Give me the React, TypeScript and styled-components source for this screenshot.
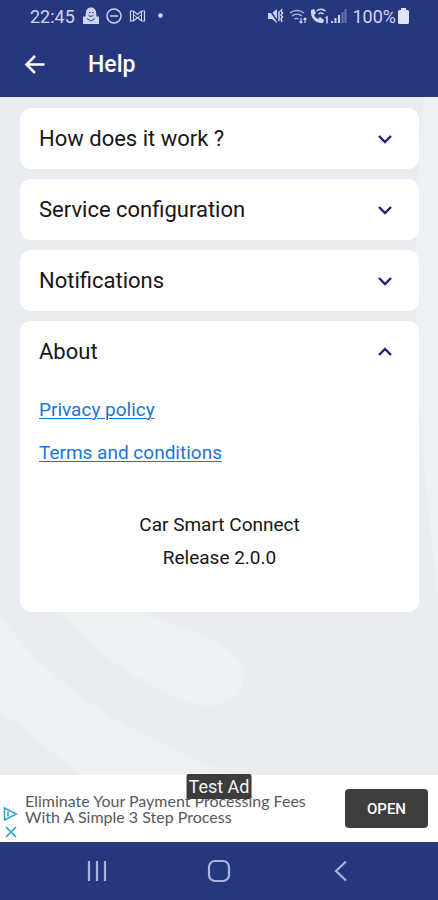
import React, { useState } from "react";
import styled, { createGlobalStyle } from "styled-components";

const NAVY = "#27377d";
const PALE = "#cdd5f3";

const GlobalStyle = createGlobalStyle`
  *, *::before, *::after { box-sizing: border-box; }
  body { margin: 0; background: #e9edf1; }
  button { font: inherit; color: inherit; background: none; border: 0; padding: 0; cursor: pointer; }
`;

const Screen = styled.div`
  display: flex;
  flex-direction: column;
  min-height: 100vh;
  font-family: Roboto, "Noto Sans", sans-serif;
  color: #161616;
`;

const StatusBar = styled.div`
  display: flex;
  justify-content: space-between;
  align-items: center;
  height: 32px;
  padding: 0 29px 0 30px;
  background: ${NAVY};
  color: ${PALE};
  font-size: 18px;
`;

const StatusGroup = styled.div<{ $gap: number }>`
  display: flex;
  align-items: center;
  gap: ${(p) => p.$gap}px;
`;

const Toolbar = styled.header`
  display: flex;
  align-items: center;
  gap: 40px;
  height: 65px;
  padding: 0 22px;
  background: ${NAVY};
  color: #fff;
`;

const IconButton = styled.button`
  display: flex;
  align-items: center;
  justify-content: center;
`;

const Title = styled.h1`
  margin: 0;
  font-size: 23px;
  line-height: 28px;
  font-weight: 500;
`;

const Main = styled.main`
  position: relative;
  flex: 1;
  padding: 11px 19px 11px 20px;
  overflow: hidden;
`;

const Backdrop = styled.svg`
  position: absolute;
  inset: 0;
  width: 100%;
  height: 100%;
`;

const CardList = styled.div`
  position: relative;
  display: flex;
  flex-direction: column;
  gap: 10px;
`;

const Card = styled.section`
  border-radius: 11px;
  background: #fff;
`;

const CardHeading = styled.h2`
  margin: 0;
  font-size: 22px;
  font-weight: 400;
`;

const CardToggle = styled.button`
  display: flex;
  align-items: center;
  justify-content: space-between;
  width: 100%;
  height: 61px;
  padding: 0 26px 0 19px;
  text-align: left;
`;

const CardBody = styled.div`
  padding: 6px 19px 38px;
  font-size: 19px;
`;

const LinkList = styled.div`
  display: flex;
  flex-direction: column;
  align-items: flex-start;
`;

const TextLink = styled.a`
  line-height: 43px;
  color: #1c74d8;
  text-decoration-thickness: 1px;
  text-underline-offset: 2px;
`;

const Release = styled.p`
  margin: 34px 0 0;
  line-height: 33px;
  text-align: center;
`;

const AdBanner = styled.aside`
  position: relative;
  display: flex;
  align-items: center;
  height: 67px;
  padding: 0 10px 0 3px;
  background: #fff;
`;

const AdMarks = styled.div`
  display: flex;
  flex-direction: column;
  align-items: center;
  align-self: flex-end;
  gap: 3px;
  width: 15px;
  margin-right: 7px;
  padding-bottom: 3px;
`;

const AdText = styled.p`
  flex: 1;
  margin: 0;
  font-family: Lato, sans-serif;
  font-size: 16px;
  line-height: 16px;
  color: #58585c;
`;

const AdOpen = styled.button`
  width: 83px;
  height: 39px;
  border-radius: 4px;
  background: #3e3e3e;
  color: #fff;
  font-size: 15px;
  font-weight: 500;
`;

const AdTag = styled.span`
  position: absolute;
  top: -1px;
  left: 50%;
  transform: translateX(-50%);
  padding: 0 2px;
  border-radius: 2px;
  background: #3c3c3c;
  color: #f4f4f4;
  font-size: 18px;
  line-height: 25px;
  white-space: nowrap;
`;

const NavBar = styled.nav`
  display: flex;
  justify-content: space-around;
  align-items: center;
  height: 58px;
  padding: 0 36px;
  background: ${NAVY};
  color: #a9b4e0;
`;

const Chevron = ({ up }: { up: boolean }) => (
  <svg width="16" height="16" viewBox="0 0 16 16" fill="none" stroke="#1d2375" strokeWidth="2.4" aria-hidden="true">
    <path d={up ? "M2 11 8 5l6 6" : "M2 5l6 6 6-6"} />
  </svg>
);

const LeftStatusIcons = () => (
  <svg width="82" height="18" viewBox="0 0 82 18" fill="none" stroke={PALE} strokeWidth="1.5" aria-hidden="true">
    <path d="M0 9.500h2.500L3 5a5 4.500 0 0 1 10 0l.5 4.500H16V17H0z" fill={PALE} stroke="none" />
    <path d="M6 5.500h1.500M9 5.500h1.500M5.500 8a3 3 0 0 0 5 0M4 11.500l4 2.500 4-2.500" stroke={NAVY} strokeWidth="1" />
    <circle cx="31" cy="9" r="7" />
    <path d="M27 9h8" />
    <path d="M47.500 4h3l4 3.500 4-3.500h3v10h-3l-4-3.500-4 3.500h-3z" strokeWidth="1.2" />
    <path d="M50.500 4v10M58.500 4v10M50.500 7.500l4 3.500 4-3.500" strokeWidth="1" />
    <circle cx="77.500" cy="8.500" r="2.300" fill={PALE} stroke="none" />
  </svg>
);

const RightStatusIcons = () => (
  <svg width="79" height="18" viewBox="0 0 79 18" fill="none" stroke={PALE} strokeWidth="1.5" aria-hidden="true">
    <path d="M0 6h4l5-4v14l-5-4H0z" fill={PALE} stroke="none" />
    <path d="M1 2l9 13" stroke={NAVY} />
    <path d="M11 4v10M14 2l-1 2 1.500 2-1.500 2 1.500 2-1.500 2 1 3" />
    <path d="M22 6a11 11 0 0 1 14 0M24 9a8 8 0 0 1 10 0M26.500 12a4 4 0 0 1 4 0" strokeWidth="1.3" opacity="0.8" />
    <path d="M33 11v5M31.500 14.500 33 16l1.500-1.500M37 16v-5M35.500 12.500 37 11l1.500 1.500" strokeWidth="1.2" />
    <path d="M43 3l3-1 2 4-2 2c1 2 2 3 4 4l2-2 4 3-1 3c-7 1-13-5-12-13z" fill={PALE} stroke="none" />
    <path d="M48.500 4a7 7 0 0 1 9 0M50.500 7a4 4 0 0 1 5 0M57.500 11l1.500-1v6.500" />
    <path d="M64 16v-2M67.500 16v-5M71 16V8" strokeWidth="2" />
    <path d="M74.500 16V5M77.500 16V2" strokeWidth="2" opacity="0.4" />
  </svg>
);

const sections = ["How does it work ?", "Service configuration", "Notifications", "About"];

export default function App() {
  const [open, setOpen] = useState("About");
  return (
    <Screen>
      <GlobalStyle />
      <StatusBar>
        <StatusGroup $gap={8}>
          <span>22:45</span>
          <LeftStatusIcons />
        </StatusGroup>
        <StatusGroup $gap={5}>
          <RightStatusIcons />
          <StatusGroup $gap={2}>
            <span>100%</span>
            <svg width="11" height="16" viewBox="0 0 11 16" fill="#e0e4f8" aria-hidden="true">
              <path d="M3 0h5v2h1.500Q11 2 11 3.500v11Q11 16 9.500 16h-8Q0 16 0 14.500v-11Q0 2 1.500 2H3z" />
            </svg>
          </StatusGroup>
        </StatusGroup>
      </StatusBar>
      <Toolbar>
        <IconButton aria-label="Back">
          <svg width="26" height="26" viewBox="0 0 26 26" fill="none" stroke="#fff" strokeWidth="2.5" aria-hidden="true">
            <path d="M22.500 12.500H5M13 4 4.500 12.500 13 21" />
          </svg>
        </IconButton>
        <Title>Help</Title>
      </Toolbar>
      <Main>
        <Backdrop viewBox="0 0 438 678" preserveAspectRatio="xMidYMax slice" fill="#ecf1f4" aria-hidden="true">
          <path d="M438 0v500c-14-120-34-300-14-500z" />
          <path d="M60 515h80c50 18 92 30 103 55 6 30-18 42-48 38C135 585 95 555 60 515z" />
          <path d="M0 520c40 50 90 95 160 125l70 33H80C50 655 25 630 0 615z" />
        </Backdrop>
        <CardList>
          {sections.map((name) => (
            <Card key={name}>
              <CardHeading>
                <CardToggle aria-expanded={open === name} onClick={() => setOpen(open === name ? "" : name)}>
                  {name}
                  <Chevron up={open === name} />
                </CardToggle>
              </CardHeading>
              {name === "About" && open === name && (
                <CardBody>
                  <LinkList>
                    <TextLink href="#privacy">Privacy policy</TextLink>
                    <TextLink href="#terms">Terms and conditions</TextLink>
                  </LinkList>
                  <Release>
                    Car Smart Connect
                    <br />
                    Release 2.0.0
                  </Release>
                </CardBody>
              )}
            </Card>
          ))}
        </CardList>
      </Main>
      <AdBanner>
        <AdMarks>
          <svg width="15" height="16" viewBox="0 0 15 16" fill="none" stroke="#22a7cb" strokeWidth="1.5" aria-hidden="true">
            <path d="M1.500 2v12L13.500 8zM5 5.500v5" />
          </svg>
          <IconButton aria-label="Close ad">
            <svg width="14" height="14" viewBox="0 0 14 14" fill="none" stroke="#22a7cb" strokeWidth="1.6" aria-hidden="true">
              <path d="M2 2l10 10M12 2 2 12" />
            </svg>
          </IconButton>
        </AdMarks>
        <AdText>
          Eliminate Your Payment Processing Fees
          <br />
          With A Simple 3 Step Process
        </AdText>
        <AdOpen>OPEN</AdOpen>
        <AdTag>Test Ad</AdTag>
      </AdBanner>
      <NavBar>
        <IconButton aria-label="Recent apps">
          <svg width="22" height="22" viewBox="0 0 22 22" fill="none" stroke="currentColor" strokeWidth="2.2" aria-hidden="true">
            <path d="M3 1v20M11 1v20M19 1v20" />
          </svg>
        </IconButton>
        <IconButton aria-label="Home">
          <svg width="24" height="24" viewBox="0 0 24 24" fill="none" stroke="currentColor" strokeWidth="2.2" aria-hidden="true">
            <rect x="2" y="2" width="20" height="20" rx="6" />
          </svg>
        </IconButton>
        <IconButton aria-label="Back to previous screen">
          <svg width="22" height="22" viewBox="0 0 22 22" fill="none" stroke="currentColor" strokeWidth="2.2" aria-hidden="true">
            <path d="M16 1.500 6 11l10 9.500" />
          </svg>
        </IconButton>
      </NavBar>
    </Screen>
  );
}
